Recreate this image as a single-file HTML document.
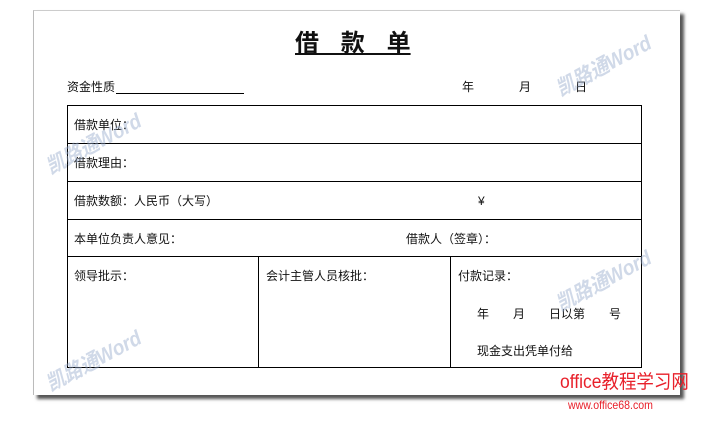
<!DOCTYPE html>
<html><head><meta charset="utf-8"><style>
*{margin:0;padding:0;box-sizing:border-box}
body{width:710px;height:422px;background:#fff;position:relative;overflow:hidden;font-family:"Liberation Sans","Noto Sans CJK SC",sans-serif;color:#111}
.page{position:absolute;left:33px;top:10px;width:647px;height:385px;background:#fff;border-left:1px solid #bbb;border-top:1px solid #ccc;box-shadow:4px 4px 3px #555}
.t{position:absolute;font-size:12px;white-space:nowrap;line-height:14px}
.h{position:absolute;left:67px;width:575px;height:1px;background:#000}
.v{position:absolute;width:1px;background:#000}
.wm{position:absolute;font-size:21px;font-weight:bold;font-style:italic;color:rgba(150,170,205,0.45);transform:rotate(-28deg) scaleX(0.9);white-space:nowrap;font-family:"Liberation Sans","Noto Sans CJK SC",sans-serif}
</style></head><body>
<div class="page"></div>
<div class="t" style="left:295px;top:27px;font-size:24px;line-height:28px;font-weight:bold;text-decoration:underline;font-family:'Noto Sans CJK SC',sans-serif">借&nbsp;&nbsp;&nbsp;&nbsp;款&nbsp;&nbsp;&nbsp;&nbsp;单</div>
<div class="t" style="left:67px;top:80px">资金性质</div>
<div style="position:absolute;left:116px;top:93px;width:128px;height:1px;background:#000"></div>
<div class="t" style="left:462px;top:80px">年</div>
<div class="t" style="left:519px;top:80px">月</div>
<div class="t" style="left:575px;top:80px">日</div>
<div class="h" style="top:105px"></div>
<div class="h" style="top:143px"></div>
<div class="h" style="top:181px"></div>
<div class="h" style="top:219px"></div>
<div class="h" style="top:256px"></div>
<div class="h" style="top:367px"></div>
<div class="v" style="left:67px;top:105px;height:263px"></div>
<div class="v" style="left:641px;top:105px;height:263px"></div>
<div class="v" style="left:258px;top:256px;height:112px"></div>
<div class="v" style="left:450px;top:256px;height:112px"></div>
<div class="t" style="left:74px;top:118px">借款单位：</div>
<div class="t" style="left:74px;top:156px">借款理由：</div>
<div class="t" style="left:74px;top:194px">借款数额：人民币（大写）</div>
<div class="t" style="left:478px;top:194px">¥</div>
<div class="t" style="left:74px;top:232px">本单位负责人意见：</div>
<div class="t" style="left:406px;top:232px">借款人（签章）：</div>
<div class="t" style="left:74px;top:269px">领导批示：</div>
<div class="t" style="left:266px;top:269px">会计主管人员核批：</div>
<div class="t" style="left:458px;top:269px">付款记录：</div>
<div class="t" style="left:477px;top:307px">年　　月　　日以第　　号</div>
<div class="t" style="left:477px;top:344px">现金支出凭单付给</div>
<div class="wm" style="left:545px;top:50px">凯路通Word</div>
<div class="wm" style="left:35px;top:128px">凯路通Word</div>
<div class="wm" style="left:545px;top:265px">凯路通Word</div>
<div class="wm" style="left:35px;top:345px">凯路通Word</div>
<div class="t" style="left:560px;top:372px;font-size:19px;line-height:22px;color:#e8202a;transform:scaleX(0.92);transform-origin:left">office教程学习网</div>
<div class="t" style="left:568px;top:399px;font-size:12px;line-height:13px;color:#e8202a;transform:scaleX(0.88);transform-origin:left">www.office68.com</div>
</body></html>
